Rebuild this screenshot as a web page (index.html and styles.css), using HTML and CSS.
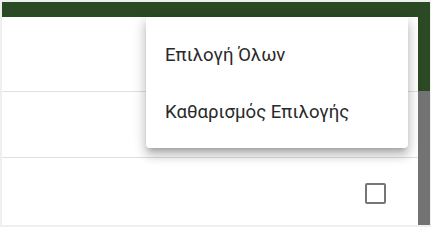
FILE: index.html
```html
<!DOCTYPE html>
<html lang="el">
<head>
<meta charset="utf-8">
<link rel="stylesheet" href="styles.css">
</head>
<body>
<div class="frame">
  <div class="topbar"></div>
  <div class="main">
    <div class="panel">
      <div class="row row-first"></div>
      <div class="row row-second"></div>
      <div class="row row-third">
        <span class="checkbox"></span>
      </div>
    </div>
    <div class="side">
      <div class="side-top"></div>
      <div class="side-bottom"></div>
    </div>
  </div>
  <div class="menu">
    <div class="menu-item">Επιλογή Όλων</div>
    <div class="menu-item">Καθαρισμός Επιλογής</div>
  </div>
</div>
</body>
</html>
```
FILE: styles.css
```css
html, body {
  margin: 0;
  padding: 0;
  background: #efefef;
  width: 431px;
  height: 227px;
  overflow: hidden;
}
.frame {
  position: relative;
  margin: 2px 1px 2px 2px;
  height: 223px;
  display: flex;
  flex-direction: column;
  font-family: Roboto, "Noto Sans", sans-serif;
}
.topbar {
  height: 15px;
  background: #2b4a24;
}
.main {
  flex: 1;
  display: flex;
}
.panel {
  flex: 1;
  background: #fff;
  display: flex;
  flex-direction: column;
}
.row {
  border-bottom: 1px solid #e0e0e0;
  box-sizing: border-box;
}
.row-first { height: 75px; }
.row-second { height: 66px; }
.row-third {
  flex: 1;
  border-bottom: none;
  display: flex;
  justify-content: flex-end;
  align-items: flex-start;
  padding: 25px 32px 0 0;
}
.checkbox {
  width: 21px;
  height: 21px;
  box-sizing: border-box;
  border: 2px solid #767676;
  border-radius: 2px;
}
.side {
  width: 12px;
  display: flex;
  flex-direction: column;
}
.side-top {
  height: 74px;
  background: #2b4a24;
}
.side-bottom {
  flex: 1;
  background: #737373;
}
.menu {
  position: absolute;
  left: 144px;
  top: 15px;
  width: 262px;
  padding: 10px 0 7px;
  background: #fff;
  border-radius: 0 0 4px 4px;
  box-shadow: 0 5px 5px -3px rgba(0,0,0,.2), 0 8px 10px 1px rgba(0,0,0,.14), 0 3px 14px 2px rgba(0,0,0,.12);
}
.menu-item {
  height: 57px;
  line-height: 57px;
  padding-left: 19px;
  font-size: 18.6px;
  color: #2a2a2a;
  white-space: nowrap;
}
```
